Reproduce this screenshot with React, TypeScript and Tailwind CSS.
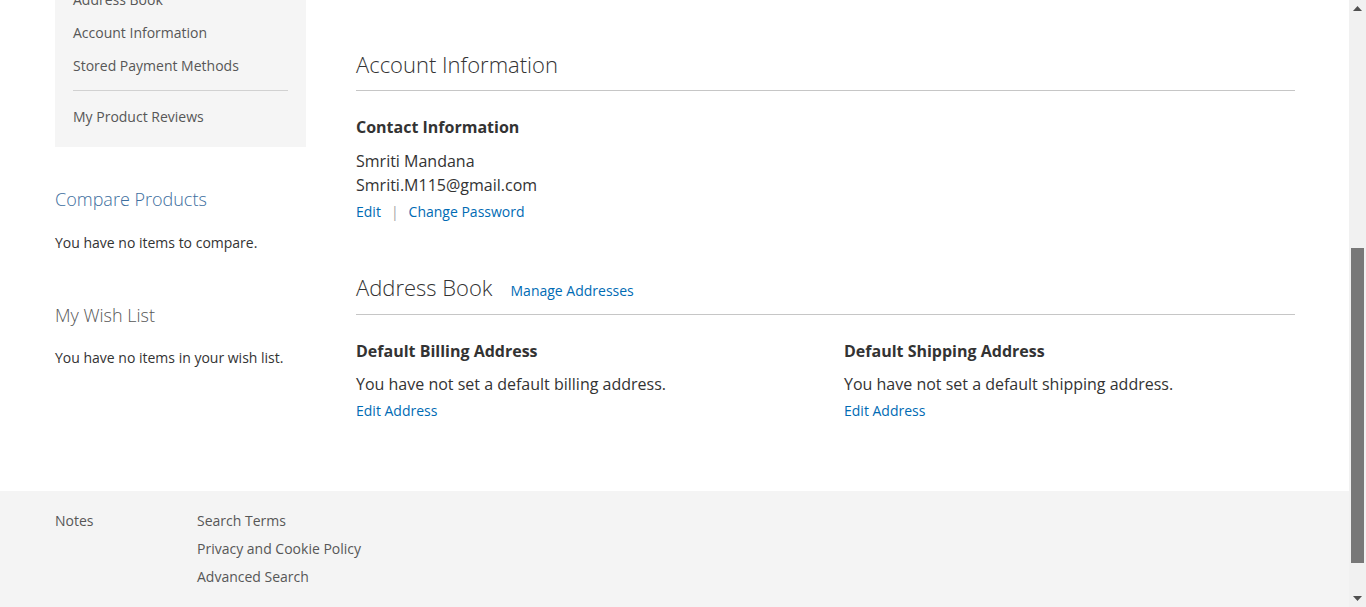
function Scrollbar() {
    return (
        <div className="w-[17px] shrink-0 bg-[#f1f1f1] flex flex-col">
            <div className="h-[17px] flex items-center justify-center">
                <svg width="9" height="5" viewBox="0 0 9 5">
                    <path d="M0 5 L4.5 0 L9 5 Z" fill="#505050" />
                </svg>
            </div>
            <div className="flex-1 flex flex-col">
                <div className="mt-[231px] h-[315px] mx-[2px] bg-[#787878]" />
            </div>
            <div className="h-[17px] flex items-center justify-center">
                <svg width="9" height="5" viewBox="0 0 9 5">
                    <path d="M0 0 L9 0 L4.5 5 Z" fill="#505050" />
                </svg>
            </div>
        </div>
    );
}

const navLinks = ["Address Book", "Account Information", "Stored Payment Methods"];

export default function App() {
    return (
        <div className="flex h-[607px] overflow-hidden bg-white font-['Open_Sans',sans-serif] text-[#333]">
            <div className="flex-1 flex flex-col min-w-0">
                {/* Page main */}
                <div className="h-[491px] shrink-0 flex px-[55px]">
                    {/* Sidebar */}
                    <aside className="w-[301px] shrink-0 pr-[50px]">
                        <nav className="-mt-[17px] bg-[#f5f5f5] pb-[14px]">
                            {navLinks.map((l) => (
                                <div key={l} className="h-[33px] flex items-center pl-[18px] text-[14px] text-[#575757]">
                                    {l}
                                </div>
                            ))}
                            <div className="mt-[8px] mb-[9px] ml-[18px] mr-[18px] border-t border-[#d1d1d1]" />
                            <div className="h-[33px] flex items-center pl-[18px] text-[14px] text-[#575757]">
                                My Product Reviews
                            </div>
                        </nav>

                        <div className="mt-[40px]">
                            <h3 className="text-[18px] leading-[24px] font-light text-[#3d6e9e]">Compare Products</h3>
                            <p className="mt-[22px] text-[14px] leading-[20px]">You have no items to compare.</p>
                        </div>

                        <div className="mt-[50px]">
                            <h3 className="text-[18px] leading-[24px] font-light text-[#575757]">My Wish List</h3>
                            <p className="mt-[21px] text-[14px] leading-[20px]">You have no items in your wish list.</p>
                        </div>
                    </aside>

                    {/* Main column */}
                    <main className="w-[939px] shrink-0">
                        <div className="mt-[50px] pb-[12px] border-b border-[#c6c6c6]">
                            <h2 className="text-[22px] leading-[28px] font-light">Account Information</h2>
                        </div>

                        <div className="mt-[26px]">
                            <h4 className="text-[16px] leading-[20px] font-bold">Contact Information</h4>
                            <div className="mt-[12px] text-[16px] leading-[24px]">
                                <p>Smriti Mandana</p>
                                <p>Smriti.M115@gmail.com</p>
                            </div>
                            <div className="mt-[5px] flex items-center text-[14px] leading-[20px] text-[#006bb4]">
                                <a href="#">Edit</a>
                                <span className="mx-[10px] text-[#a6a6a6]">|</span>
                                <a href="#">Change Password</a>
                            </div>
                        </div>

                        <div className="mt-[51px] pb-[13px] border-b border-[#c6c6c6] flex items-baseline gap-[18px]">
                            <h2 className="text-[22px] leading-[28px] font-light">Address Book</h2>
                            <a href="#" className="text-[14px] text-[#006bb4]">Manage Addresses</a>
                        </div>

                        <div className="mt-[26px] flex justify-between">
                            <div className="w-[451px]">
                                <h4 className="text-[16px] leading-[20px] font-bold">Default Billing Address</h4>
                                <p className="mt-[11px] text-[16px] leading-[24px]">You have not set a default billing address.</p>
                                <a href="#" className="mt-[5px] block text-[14px] leading-[20px] text-[#006bb4]">Edit Address</a>
                            </div>
                            <div className="w-[451px]">
                                <h4 className="text-[16px] leading-[20px] font-bold">Default Shipping Address</h4>
                                <p className="mt-[11px] text-[16px] leading-[24px]">You have not set a default shipping address.</p>
                                <a href="#" className="mt-[5px] block text-[14px] leading-[20px] text-[#006bb4]">Edit Address</a>
                            </div>
                        </div>
                    </main>
                </div>

                {/* Footer */}
                <footer className="flex-1 bg-[#f4f4f4] px-[55px] pt-[20px] flex text-[14px] leading-[20px] text-[#575757]">
                    <div className="w-[142px] shrink-0">Notes</div>
                    <ul className="flex flex-col gap-[8px]">
                        <li>Search Terms</li>
                        <li>Privacy and Cookie Policy</li>
                        <li>Advanced Search</li>
                    </ul>
                </footer>
            </div>
            <Scrollbar />
        </div>
    );
}
